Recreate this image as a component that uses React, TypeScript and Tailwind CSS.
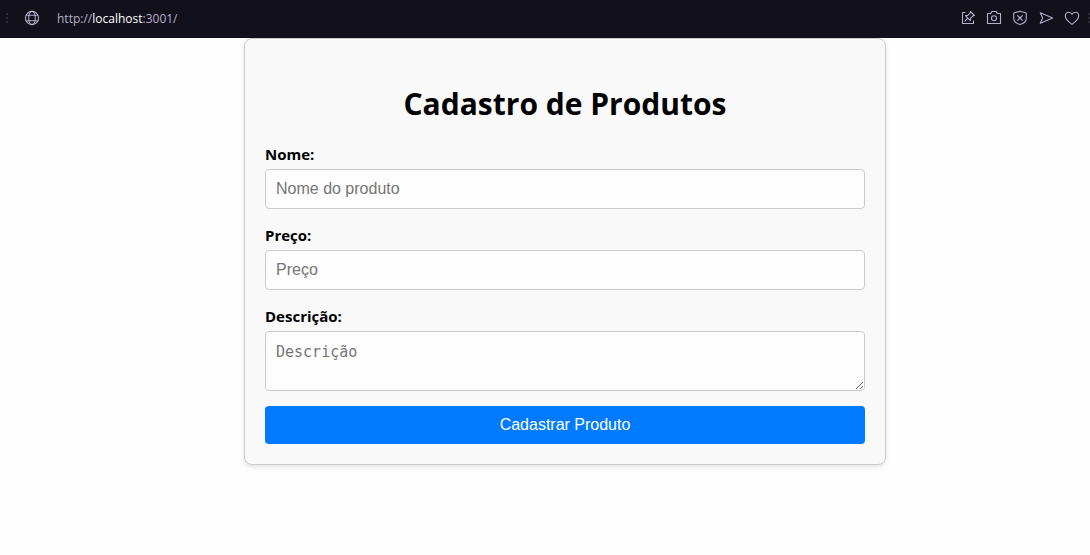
import type { ReactNode } from "react";

const fieldClass =
  "block w-full rounded border border-[#ccc] bg-[#fdfdfd] px-[10px] text-black placeholder:text-[#757575] placeholder:opacity-100";

function Icon({ children }: { children: ReactNode }) {
  return (
    <svg
      className="size-4"
      viewBox="0 0 16 16"
      fill="none"
      stroke="currentColor"
      strokeWidth="1.1"
      strokeLinejoin="round"
      aria-hidden="true"
    >
      {children}
    </svg>
  );
}

function Grip() {
  return (
    <svg className="h-3 w-[2px] fill-[#2d2a3a]" viewBox="0 0 2 12" aria-hidden="true">
      <path d="M0 1h2v2H0zM0 5h2v2H0zM0 9h2v2H0z" />
    </svg>
  );
}

function ToolButton({ label, children }: { label: string; children: ReactNode }) {
  return (
    <button type="button" aria-label={label} className="flex size-4 items-center justify-center">
      <Icon>{children}</Icon>
    </button>
  );
}

function AddressBar() {
  return (
    <header className="flex h-[38px] items-center bg-[#12101a] pb-[2px] pl-[6px] text-[#b5aecb]">
      <Grip />
      <span className="ml-4 flex">
        <Icon>
          <circle cx="8" cy="8" r="6.6" />
          <ellipse cx="8" cy="8" rx="3.3" ry="6.6" />
          <path d="M2.2 5.2h11.6M2.2 10.8h11.6" />
        </Icon>
      </span>
      <a
        href="http://localhost:3001/"
        className="ml-[17px] pt-[2px] font-['Open_Sans','Noto_Sans',sans-serif] text-xs"
      >
        http://<span className="text-white">localhost</span>:3001/
      </a>
      <div className="ml-auto flex items-center gap-[10px]">
        <ToolButton label="Fixar">
          <path d="M5.5 2.5h-3v11h11V10.5" />
          <path d="M10.5 1.5 14.5 5.5 12.9 5.9 10.6 8.2 10.3 10.6 5.4 5.7 7.8 5.4 10.1 3.1zM7.8 8.2 4.6 11.4" />
        </ToolButton>
        <ToolButton label="Captura de tela">
          <path d="M1.5 3.5h3.3l1-2h4.4l1 2h3.3v10h-13z" />
          <circle cx="8" cy="8.3" r="2.5" />
        </ToolButton>
        <ToolButton label="Bloqueador">
          <path d="M8 1.3 14.3 3v5.5c0 3-2.9 5-6.3 6.1-3.4-1.1-6.3-3.1-6.3-6.1V3z" />
          <path d="m5.4 5.4 5.2 5.2m0-5.2-5.2 5.2" strokeWidth="1.3" />
        </ToolButton>
        <ToolButton label="Enviar">
          <path d="M2.3 2.7 14.7 8 2.3 13.3 4.7 8z" />
        </ToolButton>
        <ToolButton label="Favoritar">
          <path d="M8 14.4C4.5 11.7 1.3 9.2 1.3 5.9 1.3 3.7 2.9 2.2 4.7 2.2 6.2 2.2 7.4 3 8 4.4 8.6 3 9.8 2.2 11.3 2.2c1.8 0 3.4 1.5 3.4 3.7 0 3.3-3.2 5.8-6.7 8.5z" />
        </ToolButton>
      </div>
      <span className="ml-2 flex">
        <Grip />
      </span>
    </header>
  );
}

function Field({ id, label, children }: { id: string; label: string; children: ReactNode }) {
  return (
    <div className="flex flex-col gap-1">
      <label htmlFor={id} className="text-[15px] leading-[22px] font-bold">
        {label}
      </label>
      {children}
    </div>
  );
}

export default function App() {
  return (
    <div className="min-h-screen bg-[#fdfdfd] font-['Open_Sans','Noto_Sans',sans-serif] text-black">
      <AddressBar />
      <main className="pl-10">
        <form
          className="mx-auto flex max-w-[642px] flex-col gap-[15px] rounded-lg border border-[#ccc] bg-[#f9f9f9] p-5 shadow-[0_2px_4px_rgba(0,0,0,0.1)]"
          onSubmit={(event) => event.preventDefault()}
        >
          <h1 className="pt-6 pb-1 text-center text-[30px] leading-[41px] font-bold">
            Cadastro de Produtos
          </h1>
          <Field id="nome" label="Nome:">
            <input
              id="nome"
              type="text"
              placeholder="Nome do produto"
              className={`${fieldClass} h-10 font-['Liberation_Sans',Arial,sans-serif] text-base`}
            />
          </Field>
          <Field id="preco" label="Preço:">
            <input
              id="preco"
              type="text"
              placeholder="Preço"
              className={`${fieldClass} h-10 font-['Liberation_Sans',Arial,sans-serif] text-base`}
            />
          </Field>
          <Field id="descricao" label="Descrição:">
            <textarea
              id="descricao"
              placeholder="Descrição"
              className={`${fieldClass} h-[60px] resize-y py-[10px] font-['DejaVu_Sans_Mono',monospace] text-[15px] leading-5`}
            />
          </Field>
          <button
            type="submit"
            className="h-[38px] rounded bg-[#007bff] font-['Liberation_Sans',Arial,sans-serif] text-base text-white"
          >
            Cadastrar Produto
          </button>
        </form>
      </main>
    </div>
  );
}
